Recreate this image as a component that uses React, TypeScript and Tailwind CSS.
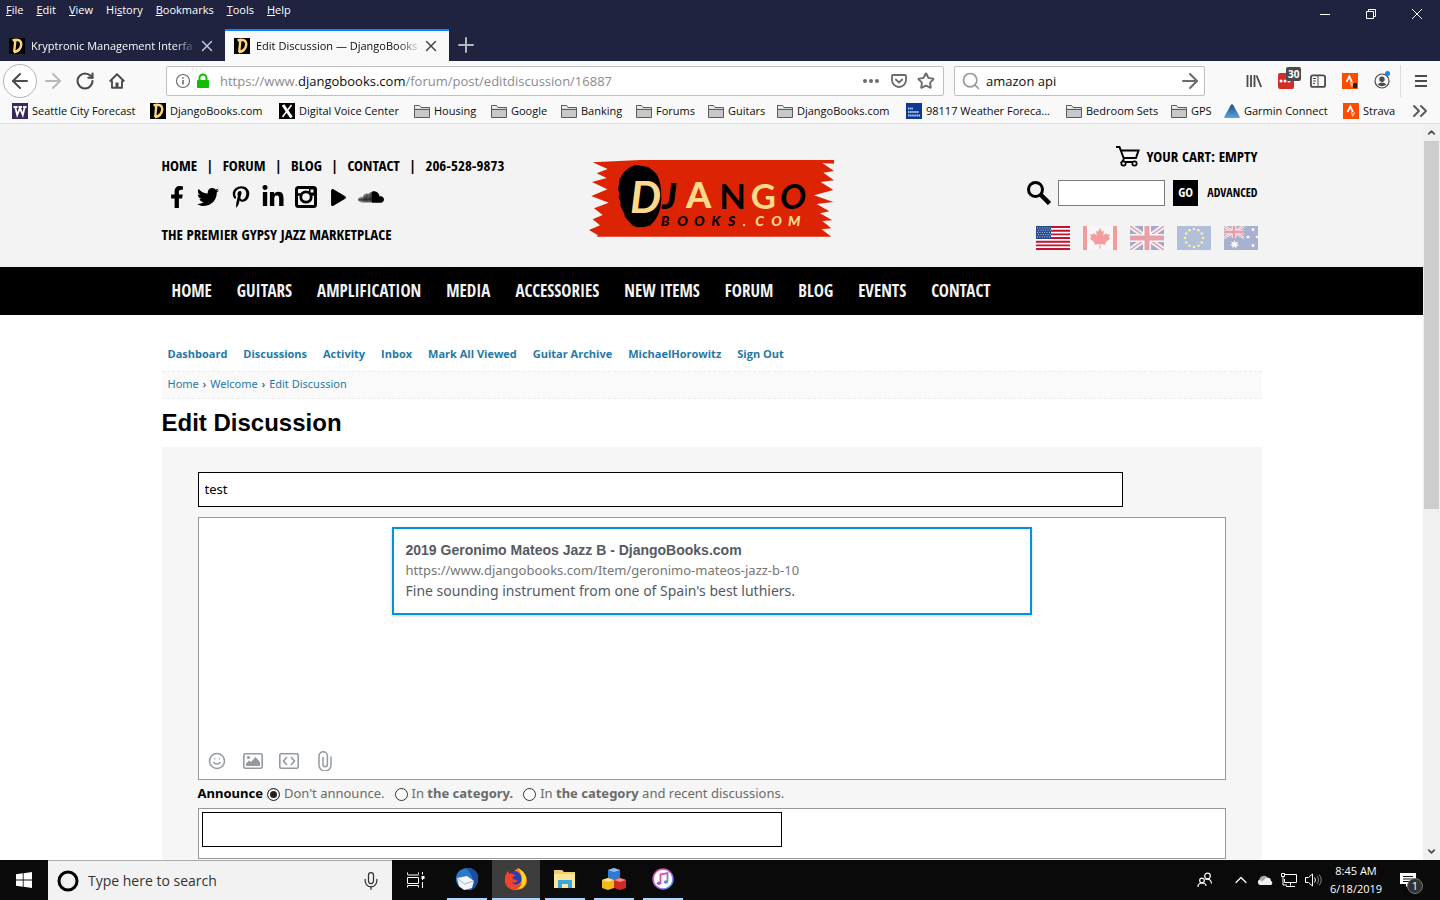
import type { ReactNode } from 'react';
import {
  FaFacebookF,
  FaLinkedinIn,
  FaPinterestP,
  FaPlay,
  FaSoundcloud,
  FaTwitter,
} from 'react-icons/fa';
import {
  ArrowLeft,
  ArrowRight,
  ChevronsRight,
  ChevronDown,
  ChevronUp,
  Mic,
  Plus,
  RotateCw,
  Search,
  Smile,
  Star,
  X,
} from 'lucide-react';

const menus = ['File', 'Edit', 'View', 'History', 'Bookmarks', 'Tools', 'Help'];
const menuKeys: Record<string, number> = { History: 2 };

type Bookmark = { label: string; icon: ReactNode; width: string };

const bookmarks: Bookmark[] = [
  { label: 'Seattle City Forecast', icon: <UwIcon />, width: 'w-[138px]' },
  { label: 'DjangoBooks.com', icon: <DIcon />, width: 'w-[129px]' },
  { label: 'Digital Voice Center', icon: <XIcon />, width: 'w-[135px]' },
  { label: 'Housing', icon: <FolderIcon />, width: 'w-[77px]' },
  { label: 'Google', icon: <FolderIcon />, width: 'w-[70px]' },
  { label: 'Banking', icon: <FolderIcon />, width: 'w-[75px]' },
  { label: 'Forums', icon: <FolderIcon />, width: 'w-[72px]' },
  { label: 'Guitars', icon: <FolderIcon />, width: 'w-[69px]' },
  { label: 'DjangoBooks.com', icon: <FolderIcon />, width: 'w-[129px]' },
  { label: '98117 Weather Foreca...', icon: <WeatherIcon />, width: 'w-[160px]' },
  { label: 'Bedroom Sets', icon: <FolderIcon />, width: 'w-[105px]' },
  { label: 'GPS', icon: <FolderIcon />, width: 'w-[53px]' },
  { label: 'Garmin Connect', icon: <GarminIcon />, width: 'w-[119px]' },
  { label: 'Strava', icon: <StravaIcon />, width: 'w-[60px]' },
];

const topLinks = ['HOME', 'FORUM', 'BLOG', 'CONTACT', '206-528-9873'];

const siteNav = [
  'HOME',
  'GUITARS',
  'AMPLIFICATION',
  'MEDIA',
  'ACCESSORIES',
  'NEW ITEMS',
  'FORUM',
  'BLOG',
  'EVENTS',
  'CONTACT',
];

const forumLinks = [
  'Dashboard',
  'Discussions',
  'Activity',
  'Inbox',
  'Mark All Viewed',
  'Guitar Archive',
  'MichaelHorowitz',
  'Sign Out',
];

function DIcon() {
  return (
    <svg viewBox="0 0 16 16" className="size-4 shrink-0" aria-hidden="true">
      <rect width="16" height="16" fill="#000" />
      <path d="M3.500 2.300C9 .8 12.700 2.500 12.200 7 11.700 11 8.500 13.500 4.800 14.200M6.300 2.500L5.200 14" fill="none" stroke="#ffd479" strokeWidth="2.400" />
    </svg>
  );
}

function UwIcon() {
  return (
    <svg viewBox="0 0 16 16" className="size-4 shrink-0" aria-hidden="true">
      <rect width="16" height="16" fill="#39275b" />
      <path d="M1.500 4h4M6.500 4h3.500M11 4h3.500M3.200 4l2 8 2.800-7 2.800 7 2-8" fill="none" stroke="#fff" strokeWidth="1.800" />
    </svg>
  );
}

function XIcon() {
  return (
    <svg viewBox="0 0 16 16" className="size-4 shrink-0" aria-hidden="true">
      <rect width="16" height="16" fill="#000" />
      <path d="M4 2l8.500 12.500" stroke="#fff" strokeWidth="3" />
      <path d="M12.500 2L3.500 14" stroke="#fff" strokeWidth="1.500" />
    </svg>
  );
}

function FolderIcon() {
  return (
    <svg viewBox="0 0 16 16" className="size-4 shrink-0" aria-hidden="true">
      <path d="M.5 14.500v-12h5l1.500 2h8.500v10z" fill="#c8c8ca" stroke="#5c5c5c" />
      <path d="M1 6.500h14.500" stroke="#5c5c5c" />
      <path d="M1 5.500V3h4.200l1.500 2H15v.5z" fill="#eee" />
    </svg>
  );
}

function WeatherIcon() {
  return (
    <svg viewBox="0 0 16 16" className="size-4 shrink-0" aria-hidden="true">
      <rect width="16" height="16" fill="#0a3a94" />
      <path d="M2 5.500h5M2 9h11M2 12.500h12" stroke="#b9cbea" strokeWidth="2" strokeDasharray="1.500 .6" />
    </svg>
  );
}

function GarminIcon() {
  return (
    <svg viewBox="0 0 16 16" className="size-4 shrink-0" aria-hidden="true">
      <defs>
        <linearGradient id="garmin" x1="0" y1="0" x2="0" y2="1">
          <stop offset="0" stopColor="#1c4f85" />
          <stop offset="1" stopColor="#5aa5dc" />
        </linearGradient>
      </defs>
      <path d="M8 1.200q.8 0 1.200.8L15.800 14q.2 1-1 1H1.200q-1.200 0-1-1L6.800 2q.4-.8 1.200-.8z" fill="url(#garmin)" />
    </svg>
  );
}

function StravaIcon() {
  return (
    <svg viewBox="0 0 16 16" className="size-4 shrink-0" aria-hidden="true">
      <rect width="16" height="16" fill="#fc4c02" />
      <path d="M4.500 9L7.300 3.500 10 9" fill="none" stroke="#fff" strokeWidth="1.800" />
      <path d="M8.200 9.300l1.700 3.500 1.700-3.500" fill="none" stroke="#ffc3a5" strokeWidth="1.300" />
    </svg>
  );
}

function Tab({ title, active }: { title: string; active?: boolean }) {
  return (
    <div
      className={
        active
          ? 'flex h-8 w-56 items-center border-t-2 border-[#0a84ff] bg-[#f9f9fa] px-[9px] text-[#0c0c0d]'
          : 'flex h-8 w-[225px] items-center border-t-2 border-transparent px-[9px] text-[#f9f9fa]'
      }
    >
      <DIcon />
      <button
        type="button"
        className="ml-1.5 min-w-0 flex-1 overflow-hidden text-left text-[11px] whitespace-nowrap [mask-image:linear-gradient(to_left,transparent,black_24px)]"
      >
        {title}
      </button>
      <button type="button" aria-label="Close tab" className="opacity-75">
        <X size={18} strokeWidth={2} />
      </button>
    </div>
  );
}

function BrowserChrome() {
  return (
    <header className="shrink-0 font-['Open_Sans','Noto_Sans',sans-serif]">
      <div className="flex items-start justify-between bg-[#202340]">
        <div>
          <nav aria-label="Menu" className="flex h-[29px] gap-[13px] px-1.5 pt-0.5 text-[11px] leading-4 text-white">
            {menus.map((name) => {
              const key = menuKeys[name] ?? 0;
              return (
                <button key={name} type="button" className="self-start">
                  {name.slice(0, key)}
                  <span className="underline">{name[key]}</span>
                  {name.slice(key + 1)}
                </button>
              );
            })}
          </nav>
          <div className="flex items-center">
            <Tab title="Kryptronic Management Interfa" />
            <Tab title="Edit Discussion — DjangoBooks" active />
            <button type="button" aria-label="New tab" className="ml-[5px] text-[#b5b6c0]">
              <Plus size={24} strokeWidth={2} />
            </button>
          </div>
        </div>
        <div className="flex h-7 items-center text-white">
          <button type="button" aria-label="Minimize" className="flex w-[46px] justify-center">
            <svg viewBox="0 0 10 10" className="size-2.5"><path d="M0 5.500h10" stroke="currentColor" /></svg>
          </button>
          <button type="button" aria-label="Restore" className="flex w-[46px] justify-center">
            <svg viewBox="0 0 10 10" className="size-2.5"><path d="M.5 2.500h7v7h-7zM2.500 2.500v-2h7v7h-2" fill="none" stroke="currentColor" /></svg>
          </button>
          <button type="button" aria-label="Close" className="flex w-[46px] justify-center">
            <svg viewBox="0 0 10 10" className="size-2.5"><path d="M0 0l10 10M10 0L0 10" stroke="currentColor" /></svg>
          </button>
        </div>
      </div>

      <div className="flex h-10 items-center bg-[#f9f9fa] pr-[11px] pl-[3px] text-[#4a4a4f]">
        <button type="button" aria-label="Back" className="flex size-[34px] items-center justify-center rounded-full border border-[#b5b5b7] bg-white">
          <ArrowLeft size={24} strokeWidth={2} />
        </button>
        <button type="button" aria-label="Forward" className="ml-1 text-[#b9b9bb]">
          <ArrowRight size={24} strokeWidth={2} />
        </button>
        <button type="button" aria-label="Reload" className="ml-2.5">
          <RotateCw size={20} strokeWidth={2.500} />
        </button>
        <button type="button" aria-label="Home page" className="ml-3.5">
          <svg viewBox="0 0 16 16" className="size-4"><path d="M.7 8.500L8 1.300l7.300 7.200M3 7.500v7.300h10V7.500" fill="none" stroke="currentColor" strokeWidth="1.900" strokeLinejoin="round" /><path d="M6.500 9.500h3V14h-3z" fill="currentColor" /></svg>
        </button>

        <div className="ml-[41px] flex h-[30px] flex-1 items-center rounded-[2px] border border-[#bebebf] bg-white px-2">
          <svg viewBox="0 0 16 16" className="size-4 text-[#6b6b6f]"><circle cx="8" cy="8" r="6.500" fill="none" stroke="currentColor" strokeWidth="1.200" /><path d="M8 7v4.500M8 4.300v1.500" stroke="currentColor" strokeWidth="1.600" /></svg>
          <svg viewBox="0 0 16 16" className="ml-1 size-4"><path d="M4.500 7V5a3.500 3.500 0 017 0v2" fill="none" stroke="#12bc00" strokeWidth="2" /><rect x="2" y="7" width="12" height="8" rx="1" fill="#12bc00" /></svg>
          <div role="textbox" aria-label="Address" tabIndex={0} className="ml-[9px] flex-1 pt-0.5 text-[13px] whitespace-nowrap text-[#8a8a8d]">
            https://www.<span className="text-[#0c0c0d]">djangobooks.com</span>/forum/post/editdiscussion/16887
          </div>
          <button type="button" aria-label="Page actions">
            <svg viewBox="0 0 16 16" className="size-4"><g fill="#6b6b6f"><circle cx="2" cy="8" r="2" /><circle cx="8" cy="8" r="2" /><circle cx="14" cy="8" r="2" /></g></svg>
          </button>
          <button type="button" aria-label="Save to Pocket" className="ml-3">
            <svg viewBox="0 0 16 16" className="size-4 text-[#6b6b6f]"><path d="M2 2h12q1 0 1 1v4a7 7 0 01-14 0V3q0-1 1-1z" fill="none" stroke="currentColor" strokeWidth="1.800" /><path d="M4.800 6.500L8 9.500l3.200-3" fill="none" stroke="currentColor" strokeWidth="1.800" strokeLinecap="round" /></svg>
          </button>
          <button type="button" aria-label="Bookmark this page" className="ml-2.5 text-[#6b6b6f]">
            <Star size={18} strokeWidth={2.500} />
          </button>
        </div>

        <div className="ml-2.5 flex h-[30px] w-[251px] items-center rounded-[2px] border border-[#bebebf] bg-white pr-0.5 pl-1.5">
          <Search size={20} strokeWidth={2} className="text-[#98989a]" />
          <input
            aria-label="Web search"
            defaultValue="amazon api"
            className="ml-[5px] min-w-0 flex-1 bg-transparent pt-0.5 text-[13px] text-[#0c0c0d] outline-none"
          />
          <button type="button" aria-label="Go" className="text-[#6b6b6f]">
            <ArrowRight size={24} strokeWidth={2} />
          </button>
        </div>

        <div className="ml-[41px] flex items-center gap-4">
          <button type="button" aria-label="Library">
            <svg viewBox="0 0 16 16" className="size-4"><path d="M1.500 2v12M5 2v12M8.500 2v12M10.500 2.500l4.700 11.500" stroke="currentColor" strokeWidth="1.800" fill="none" /></svg>
          </button>
          <button type="button" aria-label="LastPass" className="relative size-4 rounded-[2px] bg-[#d32d27]">
            <svg viewBox="0 0 16 16" className="size-4"><g fill="#fff"><circle cx="3" cy="8" r="1.500" /><circle cx="7" cy="8" r="1.500" /><circle cx="11" cy="8" r="1.500" /></g></svg>
            <span className="absolute -top-1.5 left-2 rounded-[2px] bg-[#4a4a4f] px-0.5 text-[10px] leading-[14px] font-bold text-white">30</span>
          </button>
          <button type="button" aria-label="Sidebars">
            <svg viewBox="0 0 16 16" className="size-4"><rect x=".9" y="2.400" width="14.200" height="11.500" rx="2" fill="none" stroke="currentColor" strokeWidth="1.800" /><path d="M8 2v12M3 5.500h3M3 8h3M3 10.500h2" stroke="currentColor" /></svg>
          </button>
          <button type="button" aria-label="Strava" className="relative">
            <StravaIcon />
            <span className="absolute right-px bottom-px h-[5px] w-1 rounded-[1px] bg-[#222]" />
          </button>
          <button type="button" aria-label="Account" className="relative">
            <svg viewBox="0 0 16 16" className="size-4"><circle cx="8" cy="8" r="7" fill="none" stroke="currentColor" strokeWidth="1.200" /><circle cx="8" cy="6.200" r="2.700" fill="currentColor" /><path d="M3.500 11.500q4.500-4 9 0-4.500 3.500-9 0z" fill="currentColor" /></svg>
            <span className="absolute -top-0.5 left-[11px] size-[5px] rounded-full bg-[#0a84ff]" />
          </button>
        </div>
        <div className="ml-2.5 h-8 border-l border-[#dcdcdd]" />
        <button type="button" aria-label="Open menu" className="ml-3">
          <svg viewBox="0 0 16 16" className="size-4"><path d="M2 3h12M2 8h12M2 13h12" stroke="currentColor" strokeWidth="2" /></svg>
        </button>
      </div>

      <nav aria-label="Bookmarks" className="flex h-[23px] items-start border-b border-[#dfdfe0] bg-[#f9f9fa] pl-3 text-[11px] text-[#0c0c0d]">
        {bookmarks.map((item, i) => (
          <a key={i} href="#" className={`flex h-5 shrink-0 items-center gap-1 whitespace-nowrap ${item.width}`}>
            {item.icon}
            {item.label}
          </a>
        ))}
        <button type="button" aria-label="More bookmarks" className="ml-auto flex h-5 items-center pr-2 text-[#5c5c5f]">
          <ChevronsRight size={24} strokeWidth={2} />
        </button>
      </nav>
    </header>
  );
}

function DjangoLogo() {
  return (
    <svg viewBox="27 27 738 237" className="h-[79px] w-[246px]" role="img" aria-label="DjangoBooks.com">
      <path
        d="M38 37L180 30H762V41L727 39 762 63 730 68 762 91 722 96 760 120 702 136 760 156 710 162 748 184 720 190 757 211 727 213 754 235 725 238 754 260H50L54 256 27 240 60 226 38 208 68 195 42 175 86 158 34 138 82 118 36 96 80 84 50 70 83 57z"
        fill="#dc2404"
      />
      <path
        d="M182 47l22 4 14 10 12 12 8 18 5 26 1 30-3 28-8 22-10 16-12 13-18 5-22 1-14-6-12-14-9-10-6-17-9-18 1-10-6-14 2-14-4-12 3-14 1-14 8-14 9-11 15-12 16-8z"
        fill="#000"
      />
      <g fontFamily="Lato, sans-serif" fontWeight="900" fontSize="108">
        <text x="150" y="190" fontSize="132" fontStyle="italic" fontWeight="700" fill="#ffd98a">D</text>
        <text x="246" y="178" fontStyle="italic">J</text>
        <text x="318" y="174" fill="#ffd98a">A</text>
        <text x="418" y="178" fontSize="104" fontWeight="700">N</text>
        <text x="512" y="176" fontSize="104" fontWeight="700" fill="#ffd98a">G</text>
        <text x="600" y="178" fontSize="104" fontStyle="italic" fontWeight="700">O</text>
      </g>
      <g fontFamily="Lato, sans-serif" fontWeight="900" fontStyle="italic" fontSize="42">
        <text x="242" y="227">B</text>
        <text x="292" y="227">O</text>
        <text x="342" y="227">O</text>
        <text x="394" y="227">K</text>
        <text x="444" y="227">S</text>
        <g fill="#ffd98a">
          <text x="488" y="227">.</text>
          <text x="526" y="227">C</text>
          <text x="574" y="227">O</text>
          <text x="624" y="227">M</text>
        </g>
      </g>
    </svg>
  );
}

const starSpots = [0, 30, 60, 90, 120, 150, 180, 210, 240, 270, 300, 330];

function Flags() {
  return (
    <div className="flex gap-[13px]">
      <a href="#" aria-label="US dollars">
        <svg viewBox="0 0 34 24" className="h-6 w-[34px]">
          <rect width="34" height="24" fill="#fff" />
          <path d="M0 1h34M0 4.700h34M0 8.400h34M0 12h34M0 15.700h34M0 19.400h34M0 23h34" stroke="#c4122f" strokeWidth="1.900" />
          <rect width="15" height="13" fill="#274a95" />
          <path d="M1 2h14M2 4.200h13M1 6.400h14M2 8.600h13M1 10.800h14" stroke="#b9c5e2" strokeWidth="1" strokeDasharray="1 1.400" />
        </svg>
      </a>
      <a href="#" aria-label="Canadian dollars" className="opacity-40">
        <svg viewBox="0 0 34 24" className="h-6 w-[34px]">
          <rect width="34" height="24" fill="#fff" />
          <path d="M0 0h4v24H0zM30 0h4v24h-4z" fill="#f31c1c" />
          <path d="M17 2l2 3.800 2-1-.8 5 3-2.800.6 1.600 3-.4-1 3.200 1.400 1-5 4.400.6 2-5.400-.8.200 4.500h-1.200l.2-4.500-5.400.8.600-2-5-4.400 1.400-1-1-3.200 3 .4.600-1.600 3 2.800-.8-5 2 1z" fill="#f31c1c" />
        </svg>
      </a>
      <a href="#" aria-label="British pounds" className="opacity-40">
        <svg viewBox="0 0 34 24" className="h-6 w-[34px]">
          <rect width="34" height="24" fill="#2b3f94" />
          <path d="M0 0l34 24M34 0L0 24" stroke="#fff" strokeWidth="5" />
          <path d="M0 0l34 24M34 0L0 24" stroke="#dc2440" strokeWidth="1.600" />
          <path d="M17 0v24M0 12h34" stroke="#fff" strokeWidth="8" />
          <path d="M17 0v24M0 12h34" stroke="#dc2440" strokeWidth="5" />
        </svg>
      </a>
      <a href="#" aria-label="Euros" className="opacity-40">
        <svg viewBox="0 0 34 24" className="h-6 w-[34px]">
          <rect width="34" height="24" fill="#5273b9" />
          {starSpots.map((deg) => (
            <circle
              key={deg}
              cx={17 + 9 * Math.cos((deg * Math.PI) / 180)}
              cy={12 + 9 * Math.sin((deg * Math.PI) / 180)}
              r="1.300"
              fill="#fff23a"
            />
          ))}
        </svg>
      </a>
      <a href="#" aria-label="Australian dollars" className="opacity-40">
        <svg viewBox="0 0 34 24" className="h-6 w-[34px]">
          <rect width="34" height="24" fill="#3b4f9b" />
          <path d="M0 0l20 12M20 0L0 12" stroke="#fff" strokeWidth="2.600" />
          <path d="M0 0l20 12M20 0L0 12" stroke="#dc2440" strokeWidth="1" />
          <path d="M10 0v12M0 6h20" stroke="#fff" strokeWidth="4.600" />
          <path d="M10 0v12M0 6h20" stroke="#dc2440" strokeWidth="2.800" />
          <path d="M10.500 14l1 2.500 2.500-1-1 2.500 2 1.200-2.500.6v2.400l-2-1.600-2 1.600v-2.400L6 19.200 8 18l-1-2.500 2.500 1z" fill="#fff" />
          <g fill="#fff"><circle cx="29" cy="3.500" r="1.500" /><circle cx="24" cy="11" r="1.500" /><circle cx="33" cy="11" r="1.200" /><circle cx="29" cy="19.500" r="1.500" /></g>
        </svg>
      </a>
    </div>
  );
}

function SiteHeader() {
  return (
    <>
      <div className="bg-[#f3f3f3] font-['Open_Sans_Condensed','Liberation_Sans_Narrow','Roboto_Condensed','Open_Sans',sans-serif] font-bold text-black">
        <div className="mx-auto grid h-[143px] max-w-[1100px] grid-cols-[1fr_246px_1fr]">
          <div className="pt-8">
            <div className="flex gap-[9px] text-[15px] leading-[18px]">
              {topLinks.map((label, i) => (
                <span key={label} className="flex gap-[9px] whitespace-nowrap">
                  {i > 0 && <span>|</span>}
                  <a href="#">{label}</a>
                </span>
              ))}
            </div>
            <div className="mt-2.5 flex items-center">
              <a href="#" aria-label="Facebook" className="flex w-[30px] justify-center"><FaFacebookF size={22} /></a>
              <a href="#" aria-label="Twitter" className="flex w-[33px] justify-center"><FaTwitter size={22} /></a>
              <a href="#" aria-label="Pinterest" className="flex w-8 justify-center"><FaPinterestP size={22} /></a>
              <a href="#" aria-label="LinkedIn" className="flex w-[33px] justify-center"><FaLinkedinIn size={24} /></a>
              <a href="#" aria-label="Instagram" className="flex w-8 justify-center">
                <svg viewBox="0 0 22 22" className="size-[22px]">
                  <rect x="1.500" y="1.500" width="19" height="19" rx="2" fill="none" stroke="#000" strokeWidth="3" />
                  <path d="M2 8.500h4.500M15.500 8.500H20" stroke="#000" strokeWidth="2.500" />
                  <circle cx="11" cy="11" r="5.200" fill="none" stroke="#000" strokeWidth="2.800" />
                  <path d="M14 1.500h6V8h-6z" fill="#000" />
                  <path d="M15.500 3.500h3v3h-3z" fill="#f3f3f3" />
                </svg>
              </a>
              <a href="#" aria-label="YouTube" className="flex w-[33px] justify-center"><FaPlay size={17} /></a>
              <a href="#" aria-label="SoundCloud" className="flex w-8 justify-center"><FaSoundcloud size={26} /></a>
            </div>
            <p className="mt-3.5 text-[15px] leading-5">THE PREMIER GYPSY JAZZ MARKETPLACE</p>
          </div>

          <a href="#" className="mt-[35px] self-start"><DjangoLogo /></a>

          <div className="flex flex-col items-end pt-5 pr-1">
            <a href="#" className="flex items-center gap-[7px] text-[15px] leading-6">
              <svg viewBox="0 0 24 22" className="h-[22px] w-6"><path d="M0 2h3.500l4.500 12M5 5.500h17.500L20 13H8M8 14l-2 3h14" fill="none" stroke="#000" strokeWidth="2" /><circle cx="7.500" cy="18.500" r="2.200" fill="#f3f3f3" stroke="#000" strokeWidth="1.700" /><circle cx="18.500" cy="18.500" r="2.200" fill="#f3f3f3" stroke="#000" strokeWidth="1.700" /></svg>
              YOUR CART: EMPTY
            </a>
            <form className="mt-3 flex items-center">
              <svg viewBox="0 0 24 24" className="size-6"><circle cx="8.500" cy="8.500" r="7" fill="none" stroke="#000" strokeWidth="3" /><path d="M14 14l8.500 8.500" stroke="#000" strokeWidth="4.500" /></svg>
              <input aria-label="Search the store" className="ml-[7px] h-[26px] w-[107px] border border-[#7a7a7a] bg-white px-1" />
              <button type="button" className="ml-2 h-[26px] w-[25px] bg-black text-center text-[13px] text-white">GO</button>
              <a href="#" className="ml-[9px] text-[12px]">ADVANCED</a>
            </form>
            <div className="mt-5"><Flags /></div>
          </div>
        </div>
      </div>
      <nav aria-label="Site" className="bg-black font-['Open_Sans_Condensed','Liberation_Sans_Narrow','Roboto_Condensed','Open_Sans',sans-serif] font-bold text-[#f3f3f3]">
        <div className="mx-auto flex h-12 max-w-[1100px] items-center gap-[25px] px-2.5 text-[17px]">
          {siteNav.map((label) => (
            <a key={label} href="#" className="whitespace-nowrap">{label}</a>
          ))}
        </div>
      </nav>
    </>
  );
}

function AnnounceOption({ id, checked, children }: { id: string; checked?: boolean; children: ReactNode }) {
  return (
    <span className="mr-2.5 flex items-center">
      <input
        type="radio"
        name="announce"
        id={id}
        defaultChecked={checked}
        className="mr-1 size-[13px] appearance-none rounded-full border border-[#333] bg-white checked:bg-[#222] checked:shadow-[inset_0_0_0_2px_white]"
      />
      <label htmlFor={id} className="text-[#6b6b6b]">{children}</label>
    </span>
  );
}

function ForumPage() {
  return (
    <main className="mx-auto max-w-[1100px] font-['Noto_Sans',sans-serif] text-[11px]">
      <nav aria-label="Forum" className="flex gap-4 px-1.5 pt-[31px] font-['Open_Sans','Noto_Sans',sans-serif] leading-4 font-bold text-[#1e79a7]">
        {forumLinks.map((label) => (
          <a key={label} href="#" className="whitespace-nowrap">{label}</a>
        ))}
      </nav>
      <nav aria-label="Breadcrumb" className="mt-[9px] flex gap-1 border-y border-dashed border-[#ececec] bg-[#fafafa] px-1.5 pb-0.5 leading-6 text-[#1e79a7]">
        <a href="#">Home</a>
        <span className="text-[#333]">›</span>
        <a href="#">Welcome</a>
        <span className="text-[#333]">›</span>
        <a href="#">Edit Discussion</a>
      </nav>
      <h1 className="mt-2.5 font-['Liberation_Sans',sans-serif] text-2xl leading-7 font-bold text-black">Edit Discussion</h1>

      <form className="mt-2.5 bg-[#f6f6f6] px-9 pt-[25px] pb-10">
        <input
          aria-label="Discussion title"
          defaultValue="test"
          className="block h-[35px] w-[90%] border border-black bg-white px-1.5 pb-0.5 text-[13px] text-black"
        />
        <div className="mt-2.5 flex h-[263px] flex-col border border-[#999] bg-white">
          <a
            href="#"
            className="mx-auto mt-[9px] block w-full max-w-[640px] border-2 border-[#0291db] px-3 pt-[11px] pb-3 text-[#555a62] shadow-[0_1px_3px_rgba(85,90,98,0.3)]"
          >
            <span className="block font-['Liberation_Sans',sans-serif] text-[14px] leading-5 font-bold">
              2019 Geronimo Mateos Jazz B - DjangoBooks.com
            </span>
            <span className="block text-[13px] leading-5 text-[#767676]">
              https://www.djangobooks.com/Item/geronimo-mateos-jazz-b-10
            </span>
            <span className="block text-[14px] leading-[21px]">
              Fine sounding instrument from one of Spain's best luthiers.
            </span>
          </a>
          <div className="mt-auto flex gap-4 px-2 pb-2 text-[#949aa2]">
            <button type="button" aria-label="Emoji" className="flex size-5 items-center justify-center"><Smile size={18} strokeWidth={2} /></button>
            <button type="button" aria-label="Image" className="flex size-5 items-center justify-center">
              <svg viewBox="0 0 20 16" className="h-4 w-5"><rect x=".8" y=".8" width="18.400" height="14.400" rx="1.500" fill="none" stroke="currentColor" strokeWidth="1.600" /><path d="M3 13v-2.500l3-3 2 1.500 4.500-5 4.500 5v4z" fill="currentColor" /><circle cx="5.500" cy="4.500" r="1.600" fill="currentColor" /></svg>
            </button>
            <button type="button" aria-label="HTML view" className="flex size-5 items-center justify-center">
              <svg viewBox="0 0 20 16" className="h-4 w-5"><rect x=".8" y=".8" width="18.400" height="14.400" rx="1.500" fill="none" stroke="currentColor" strokeWidth="1.600" /><path d="M8 4L4.500 8 8 12M12 4l3.500 4-3.500 4" fill="none" stroke="currentColor" strokeWidth="1.600" /></svg>
            </button>
            <button type="button" aria-label="Attach file" className="flex size-5 items-center justify-center">
              <svg viewBox="0 0 14 20" className="h-5 w-3.5"><path d="M13 6v8a6 6 0 01-12 0V5a4.200 4.200 0 018.400 0v8.500a2.200 2.200 0 01-4.400 0V6.500" fill="none" stroke="currentColor" strokeWidth="1.500" strokeLinecap="round" /></svg>
            </button>
          </div>
        </div>

        <div className="flex h-7 items-center text-[13px]">
          <strong className="mr-1 text-black">Announce</strong>
          <AnnounceOption id="announce-none" checked>Don't announce.</AnnounceOption>
          <AnnounceOption id="announce-category">In <b>the category.</b></AnnounceOption>
          <AnnounceOption id="announce-all">In <b>the category</b> and recent discussions.</AnnounceOption>
        </div>

        <div className="h-[51px] border border-[#999] bg-white p-[3px]">
          <input aria-label="Tags" className="block h-[35px] w-[580px] border border-black bg-white px-1.5 text-[13px]" />
        </div>
      </form>
    </main>
  );
}

function Scrollbar() {
  return (
    <div className="flex w-[17px] shrink-0 flex-col items-center bg-[#f0f0f0] text-[#505050]">
      <button type="button" aria-label="Scroll up" className="flex h-[17px] items-center"><ChevronUp size={11} strokeWidth={4} /></button>
      <div className="h-1/2 w-[15px] bg-[#cdcdcd]" />
      <button type="button" aria-label="Scroll down" className="mt-auto flex h-[17px] items-center"><ChevronDown size={11} strokeWidth={4} /></button>
    </div>
  );
}

function TaskbarApp({ name, active, children }: { name: string; active?: boolean; children: ReactNode }) {
  return (
    <button
      type="button"
      aria-label={name}
      className={
        active
          ? 'flex h-10 w-12 items-center justify-center border-b-2 border-[#a9d5ff] bg-[#3d3d3d]'
          : 'mx-1 flex h-10 w-10 items-center justify-center border-b-2 border-[#a9d5ff]'
      }
    >
      {children}
    </button>
  );
}

function Taskbar() {
  return (
    <footer className="flex h-10 shrink-0 items-center bg-[#0a0a0a] font-['Open_Sans','Noto_Sans',sans-serif] text-white">
      <button type="button" aria-label="Start" className="flex w-12 justify-center">
        <svg viewBox="0 0 16 16" className="size-4"><path d="M0 2.300L6.800 1.300V7.600H0zM7.600 1.200L16 0v7.600H7.600zM0 8.400h6.800v6.300L0 13.700zM7.600 8.400H16V16l-8.400-1.200z" fill="#fff" /></svg>
      </button>
      <div className="flex h-full w-[344px] items-center border-t border-[#aaa] bg-[#f2f2f2] px-[9px]">
        <svg viewBox="0 0 22 22" className="size-[22px]"><circle cx="11" cy="11" r="9" fill="none" stroke="#000" strokeWidth="3" /></svg>
        <input
          aria-label="Taskbar search"
          placeholder="Type here to search"
          className="ml-[9px] min-w-0 flex-1 bg-transparent text-[14px] outline-none placeholder:text-[#333]"
        />
        <Mic size={20} strokeWidth={1.500} className="mr-0.5 text-[#333]" />
      </div>
      <button type="button" aria-label="Task view" className="flex w-12 justify-center">
        <svg viewBox="0 0 18 16" className="h-4 w-[18px]"><path d="M.5 2.500V.5M11.500 2.500V.5M.5 3h11M.5 5.500h11v6H.5zM.5 15.500v-2h11v2M15.500 0v2.500M15.500 4.500V8M15.500 10v6" fill="none" stroke="#fff" /><path d="M14.500 4h3v3h-3z" fill="#fff" /></svg>
      </button>

      <div className="flex gap-px pl-[3px]">
        <TaskbarApp name="Thunderbird">
          <svg viewBox="0 0 24 24" className="size-6"><path d="M1 12C1 5 6 1 13 1c7 0 11 6 10 12-1 7-6 11-11 10C5 22 1 18 1 12z" fill="#2b79cc" /><path d="M11 1c8-1 13 6 12 12-1 5-3 8-7 10 4-8 2-15-5-22z" fill="#1a4f9c" /><path d="M2 11l10-2 7 5-2 7-8 2-5-4z" fill="#f3f6fa" /><path d="M2.500 11.500l7 5.500L19 14" fill="none" stroke="#9fb3cc" /></svg>
        </TaskbarApp>
        <TaskbarApp name="Firefox" active>
          <svg viewBox="0 0 24 24" className="size-6"><path d="M14 1c5 3 9 7 9 13 0 5-5 9-11 9C5 23 1 18 1 13c0-3 1-6 3-8l1 3z" fill="#ff7a1a" /><path d="M14 1c5 3 9 7 8 13-1 5-4 8-8 8 6-5 5-13 0-21z" fill="#ffd52e" /><path d="M7 5c3-2 7-1 9 2s2 8-1 10-8 0-8-4z" fill="#2a3fae" /><path d="M1 13c0-4 1-7 3-9l1 3c2-1 5 0 7 2-3 0-4 1-3 3l4 1c0 3-3 3-5 2 1 4 7 4 9 1 0 4-4 6-8 6-5 0-8-4-8-9z" fill="#f4422c" /></svg>
        </TaskbarApp>
        <TaskbarApp name="File Explorer">
          <svg viewBox="0 0 24 24" className="size-6"><path d="M1 3h8l2 2h11v16H1z" fill="#f5cf66" /><path d="M1 7h21v14H1z" fill="#ffe79a" /><path d="M5 21v-8h14v8h-4v-4H9v4z" fill="#3ba7e0" /></svg>
        </TaskbarApp>
        <TaskbarApp name="Blocks">
          <svg viewBox="0 0 24 24" className="size-6"><path d="M6 3l6-2 6 2v8l-6 2-6-2z" fill="#2f7bd0" /><path d="M6 3l6-2 6 2-6 2z" fill="#8fc1f2" /><path d="M0 13l6-2 6 2v8l-6 2-6-2z" fill="#f2b91a" /><path d="M0 13l6-2 6 2-6 2z" fill="#ffe38a" /><path d="M12 13l6-2 6 2v8l-6 2-6-2z" fill="#cf2a20" /><path d="M12 13l6-2 6 2-6 2z" fill="#f18a80" /></svg>
        </TaskbarApp>
        <TaskbarApp name="iTunes">
          <svg viewBox="0 0 24 24" className="size-6"><defs><linearGradient id="tunes" x1="0" y1="0" x2="1" y2="1"><stop offset="0" stopColor="#f2497a" /><stop offset=".5" stopColor="#b05ad8" /><stop offset="1" stopColor="#3fa9f0" /></linearGradient></defs><circle cx="12" cy="12" r="10" fill="#fff" stroke="url(#tunes)" strokeWidth="1.500" /><path d="M9.500 16V7.500l7-1.500v8.500" fill="none" stroke="url(#tunes)" strokeWidth="1.800" /><ellipse cx="8" cy="16.300" rx="2.200" ry="1.800" fill="#c052c8" /><ellipse cx="15" cy="15" rx="2.200" ry="1.800" fill="#6a80e8" /></svg>
        </TaskbarApp>
      </div>

      <div className="ml-auto flex items-center">
        <button type="button" aria-label="People">
          <svg viewBox="0 0 16 16" className="size-4"><g fill="none" stroke="#fff" strokeWidth="1.200"><circle cx="10.500" cy="4" r="2.800" /><circle cx="5" cy="8.500" r="2.300" /><path d="M1 15q0-4 4-4t4 3M8.500 7.500q5.500-1.500 6 4" /></g></svg>
        </button>
        <button type="button" aria-label="Show hidden icons" className="ml-[18px]"><ChevronUp size={20} strokeWidth={1.500} /></button>
        <svg viewBox="0 0 16 12" className="ml-1.5 h-3 w-4"><path d="M3 11a3 3 0 01-.5-5.500A4.500 4.500 0 0110 3.500a3.500 3.500 0 014 3.500 2.200 2.200 0 010 4z" fill="#f0f0f0" /><path d="M2.500 5.500A4.500 4.500 0 0110 3L5 7.500z" fill="#a8a8a8" /></svg>
        <svg viewBox="0 0 16 14" className="ml-2 h-3.5 w-4"><path d="M3.500 2.500V1.500h12v8h-12V6M9.500 9.500v3M5 13.500h9M.5.5h3v3h-3zM2 4v8h4" fill="none" stroke="#fff" /></svg>
        <svg viewBox="0 0 17 14" className="ml-2 h-3.5 w-[17px]"><path d="M.5 4.500h3l4-3.500v12l-4-3.500h-3zM9.500 4.500q2 2.500 0 5" fill="none" stroke="#fff" /><path d="M11.800 3q3.500 4 0 8M14 1.500q4.500 5.500 0 11" fill="none" stroke="#888" /></svg>
        <div className="ml-2 w-[52px] text-center text-[11px] leading-[18px] whitespace-nowrap">
          <div>8:45 AM</div>
          <div>6/18/2019</div>
        </div>
        <button type="button" aria-label="Notifications" className="relative mr-6 ml-[18px]">
          <svg viewBox="0 0 16 16" className="size-4"><path d="M0 1h16v11H9l-3 3v-3H0z" fill="#fff" /><path d="M3 4.500h10M3 7h10M3 9.500h7" stroke="#111" /></svg>
          <span className="absolute top-1.5 left-[7px] flex size-4 items-center justify-center rounded-full border border-[#777] bg-[#333] text-[11px]">1</span>
        </button>
      </div>
    </footer>
  );
}

export default function App() {
  return (
    <div className="flex h-screen flex-col overflow-hidden bg-white">
      <BrowserChrome />
      <div className="flex min-h-0 flex-1">
        <div className="min-w-0 flex-1 overflow-hidden">
          <SiteHeader />
          <ForumPage />
        </div>
        <Scrollbar />
      </div>
      <Taskbar />
    </div>
  );
}
